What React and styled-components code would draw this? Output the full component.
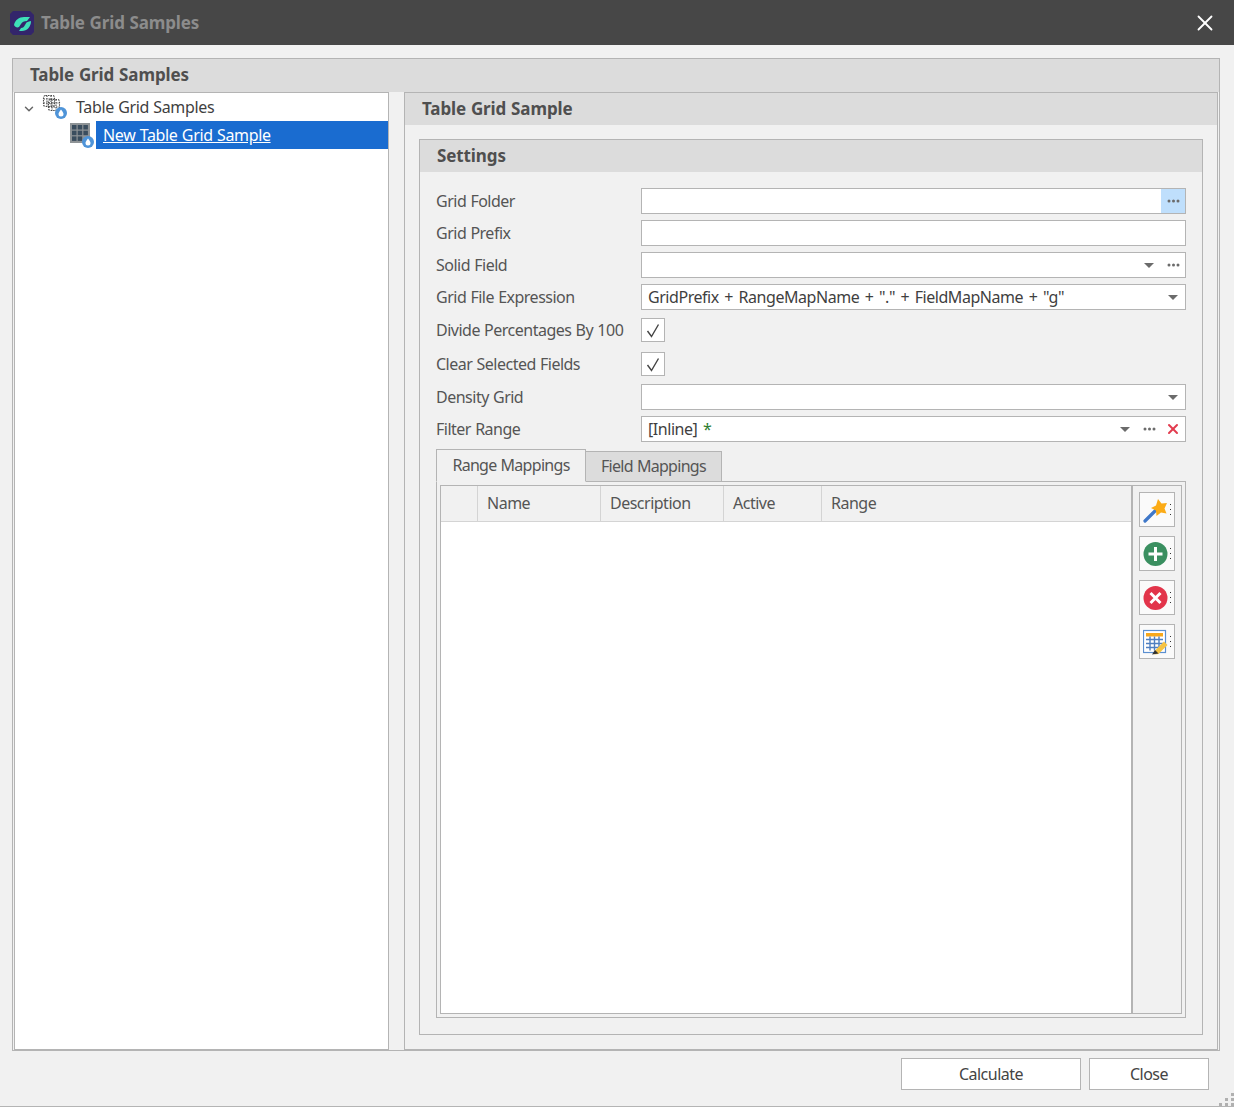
import React from 'react'
import styled, { createGlobalStyle } from 'styled-components'
import { X, ChevronDown } from 'lucide-react'

const GlobalStyle = createGlobalStyle`
  html, body { margin: 0; padding: 0; background: #f1f1f1; }
  body { font-family: "Noto Sans", "Open Sans", "Liberation Sans", sans-serif; font-size: 16px; letter-spacing: -0.5px; word-spacing: 0.5px; color: #4d4d4d; }
  * { box-sizing: border-box; }
`

const line = '#b4b4b4'

const Window = styled.div`
  width: 1234px;
  height: 1107px;
  display: flex;
  flex-direction: column;
  background: #f1f1f1;
  border-bottom: 1px solid ${line};
  position: relative;
  overflow: hidden;
`

const TitleBar = styled.div`
  height: 45px;
  flex: none;
  background: #474747;
  display: flex;
  align-items: center;
  padding: 0 16px 0 10px;
  gap: 7px;
`

const TitleText = styled.div`
  flex: 1;
  font-size: 17px;
  font-weight: 700;
  color: #8c8c8c;
  letter-spacing: -0.15px;
`

const Body = styled.div`
  flex: 1;
  min-height: 0;
  display: flex;
  flex-direction: column;
  padding: 13px 14px 0 12px;
`

const Group = styled.div`
  flex: 1;
  min-height: 0;
  display: flex;
  flex-direction: column;
  border: 1px solid ${line};
`

const GroupHeader = styled.div`
  flex: none;
  height: ${p => p.$height || 33}px;
  background: #dcdcdc;
  display: flex;
  align-items: center;
  padding-left: ${p => p.$indent || 17}px;
  padding-bottom: 2px;
  font-size: 17px;
  font-weight: 700;
  color: #4f4f4f;
  letter-spacing: -0.1px;
`

const Split = styled.div`
  flex: 1;
  min-height: 0;
  display: flex;
  padding: 0 1px 0 1px;
`

const TreePanel = styled.div`
  width: 375px;
  flex: none;
  background: #fff;
  border: 1px solid ${line};
`

const TreeRow = styled.div`
  height: 28px;
  display: flex;
  align-items: center;
  position: relative;
  padding-left: ${p => p.$indent}px;
`

const TreeLabel = styled.span`
  height: 28px;
  display: flex;
  align-items: center;
  flex: ${p => (p.$selected ? 1 : 'none')};
  padding-left: 7px;
  padding-bottom: 1px;
  letter-spacing: -0.35px;
  margin-left: ${p => p.$offset || 0}px;
  background: ${p => (p.$selected ? '#1a6cd0' : 'transparent')};
  color: ${p => (p.$selected ? '#fff' : '#3f3f3f')};
  text-decoration: ${p => (p.$selected ? 'underline' : 'none')};
`

const Expander = styled.span`
  width: 28px;
  display: flex;
  justify-content: center;
  color: #666;
  margin-top: 3px;
`

const TreeIcon = styled.svg`
  position: absolute;
  top: ${p => p.$top}px;
  left: ${p => p.$left}px;
`

const RightPanel = styled.div`
  flex: 1;
  margin-left: 15px;
  display: flex;
  flex-direction: column;
  border: 1px solid ${line};
  background: #f1f1f1;
`

const RightBody = styled.div`
  flex: 1;
  min-height: 0;
  display: flex;
  padding: 14px 14px 14px 14px;
`

const SettingsBox = styled.div`
  flex: 1;
  display: flex;
  flex-direction: column;
  border: 1px solid ${line};
`

const Form = styled.div`
  flex: 1;
  min-height: 0;
  display: flex;
  flex-direction: column;
  gap: 6px;
  padding: 16px 16px 16px 16px;
`

const Row = styled.div`
  flex: none;
  height: ${p => (p.$check ? 28 : 26)}px;
  display: flex;
  align-items: center;
`

const Label = styled.label`
  width: 205px;
  flex: none;
  color: #555;
`

const Input = styled.div`
  flex: 1;
  height: 26px;
  display: flex;
  align-items: center;
  background: #fff;
  border: 1px solid ${line};
  padding-left: 6px;
  color: #3f3f3f;
  white-space: pre;
  letter-spacing: -0.45px;
  word-spacing: 1.8px;
`

const InputText = styled.span`
  flex: 1;
`

const Star = styled.span`
  color: #2e7d32;
`

const EditBtn = styled.span`
  width: 24px;
  height: 24px;
  flex: none;
  display: flex;
  align-items: center;
  justify-content: center;
  background: ${p => (p.$active ? '#bfdffc' : 'transparent')};
  color: #e23b4e;
`

const CheckBox = styled.div`
  width: 24px;
  height: 24px;
  background: #fff;
  border: 1px solid ${line};
  display: flex;
  align-items: center;
  justify-content: center;
  color: #444;
`

const Tabs = styled.div`
  flex: 1;
  min-height: 0;
  margin-top: 1px;
  display: flex;
  flex-direction: column;
`

const TabStrip = styled.div`
  flex: none;
  height: 33px;
  display: flex;
  align-items: flex-end;
  margin-bottom: -1px;
  position: relative;
  z-index: 1;
`

const Tab = styled.div`
  height: ${p => (p.$active ? 33 : 31)}px;
  width: ${p => (p.$active ? 150 : 136)}px;
  display: flex;
  align-items: center;
  justify-content: center;
  padding-bottom: 2px;
  letter-spacing: -0.7px;
  border: 1px solid ${line};
  border-left: ${p => (p.$active ? `1px solid ${line}` : 'none')};
  border-bottom: ${p => (p.$active ? '1px solid #f1f1f1' : `1px solid ${line}`)};
  background: ${p => (p.$active ? '#f1f1f1' : '#dcdcdc')};
  color: #555;
`

const TabPane = styled.div`
  flex: 1;
  min-height: 0;
  border: 1px solid ${line};
  padding: 3px;
  display: flex;
`

const Inner = styled.div`
  flex: 1;
  display: flex;
  border: 1px solid ${line};
`

const Grid = styled.div`
  flex: 1;
  background: #fff;
  display: flex;
  flex-direction: column;
`

const GridHead = styled.div`
  flex: none;
  height: 36px;
  display: flex;
  background: #f1f1f1;
  border-bottom: 1px solid #d4d4d4;
`

const HeadCell = styled.div`
  width: ${p => p.$w}px;
  flex: ${p => (p.$grow ? 1 : 'none')};
  display: flex;
  align-items: center;
  padding-left: 9px;
  padding-bottom: 2px;
  border-right: ${p => (p.$grow ? 'none' : '1px solid #d4d4d4')};
  color: #555;
`

const SideBar = styled.div`
  width: 50px;
  flex: none;
  border-left: 2px solid ${line};
  display: flex;
  flex-direction: column;
  gap: 9px;
  padding: 6px 0 0 6px;
`

const ToolButton = styled.div`
  width: 36px;
  height: 35px;
  background: #fafafa;
  border: 1px solid ${line};
  display: flex;
  align-items: center;
  padding-left: 3px;
  gap: 1px;
`

const Grab = styled.span`
  width: 1px;
  height: 12px;
  background-image: linear-gradient(#333 1px, transparent 1px);
  background-size: 1px 5px;
`

const Footer = styled.div`
  flex: none;
  height: 55px;
  display: flex;
  justify-content: flex-end;
  gap: 8px;
  padding: 7px 11px 0 0;
`

const Button = styled.button`
  width: ${p => p.$w}px;
  height: 32px;
  background: #fff;
  border: 1px solid ${line};
  font: inherit;
  letter-spacing: inherit;
  color: #444;
`

const Grip = styled.svg`
  position: absolute;
  right: 0;
  bottom: 0;
`

const Dots = ({ active }) => (
  <EditBtn $active={active}>
    <svg width="13" height="4" viewBox="0 0 13 4"><g fill="#6b6b6b"><circle cx="2" cy="2" r="1.500" /><circle cx="6.500" cy="2" r="1.500" /><circle cx="11" cy="2" r="1.500" /></g></svg>
  </EditBtn>
)

const Caret = () => (
  <EditBtn>
    <svg width="10" height="5" viewBox="0 0 10 5"><path d="M0 0h10L5 5z" fill="#6b6b6b" /></svg>
  </EditBtn>
)

const Tick = () => (
  <svg width="14" height="15" viewBox="0 0 14 15">
    <path d="M1.500 8 5.500 13.500 12.500 1.500" fill="none" stroke="#444" strokeWidth="1.400" />
  </svg>
)

const Logo = () => (
  <svg width="24" height="24" viewBox="0 0 24 24">
    <path d="M3 0h17l4 4v17l-3 3H3l-3-3V3z" fill="#33256b" />
    <path d="M4 14c1-5 5-8 10-8h6l-3 4c-3 0-5 1-6 3l-2 3c-2 1-4 0-5-2z" fill="#3ee0b8" />
    <path d="M21 10c0 6-4 10-9 10H9l2-3c2 0 3-1 4-3l1.500-2.500c1.500-1 3.500-1 4.500-1.500z" fill="#3ee0b8" />
  </svg>
)

const Drop = ({ x, y }) => (
  <g transform={`translate(${x} ${y})`}>
    <circle cx="6" cy="6" r="6" fill="#4f94d8" />
    <path d="M6 2.500c1.700 2.200 2.500 3.400 2.500 4.500a2.500 2.500 0 0 1-5 0C3.500 5.900 4.300 4.700 6 2.500z" fill="#fff" />
  </g>
)

const SamplesIcon = () => (
  <TreeIcon $left={26} $top={0} width="26" height="28" viewBox="0 0 26 28">
    <g fill="none" stroke="#4a4a4a" strokeWidth="1.100" strokeDasharray="1.500 1">
      <rect x="2.500" y="2.500" width="11" height="11" rx="2" />
      <path d="M2.500 6h11M2.500 10h11M6 2.500v11M10 2.500v11" />
      <rect x="7.500" y="6.500" width="11" height="11" rx="2" />
      <path d="M7.500 10h11M7.500 14h11M11 6.500v11M15 6.500v11" />
    </g>
    <Drop x={14} y={14} />
  </TreeIcon>
)

const GridIcon = () => (
  <TreeIcon $left={54} $top={1} width="26" height="28" viewBox="0 0 26 28">
    <rect x="1" y="1" width="20" height="20" fill="#8e9396" />
    <g fill="#3a4d5e">
      <rect x="3" y="3" width="4.500" height="4.500" /><rect x="8.700" y="3" width="4.500" height="4.500" /><rect x="14.400" y="3" width="4.500" height="4.500" />
      <rect x="3" y="8.700" width="4.500" height="4.500" /><rect x="8.700" y="8.700" width="4.500" height="4.500" /><rect x="14.400" y="8.700" width="4.500" height="4.500" />
      <rect x="3" y="14.400" width="4.500" height="4.500" /><rect x="8.700" y="14.400" width="4.500" height="4.500" />
    </g>
    <Drop x={13} y={14} />
  </TreeIcon>
)

const WandIcon = () => (
  <svg width="26" height="28" viewBox="0 0 26 28">
    <path d="M2 25 13 14" stroke="#3f78c9" strokeWidth="3.200" strokeLinecap="round" />
    <path d="M15 3l3.500 4.500 5.500-.5-2.500 5.500 2 5-5.500-1-4.500 3.500-.5-5.500-5-2.500 5-2.500z" fill="#fbab16" />
  </svg>
)

const AddIcon = () => (
  <svg width="26" height="26" viewBox="0 0 26 26">
    <circle cx="12.500" cy="13" r="12" fill="#3a8f60" />
    <path d="M12.500 6v14M5.500 13h14" stroke="#fff" strokeWidth="3" />
  </svg>
)

const RemoveIcon = () => (
  <svg width="26" height="26" viewBox="0 0 26 26">
    <circle cx="12.500" cy="13" r="12" fill="#e2344a" />
    <path d="M7.500 8l10 10M17.500 8l-10 10" stroke="#fff" strokeWidth="3" />
  </svg>
)

const TableEditIcon = () => (
  <svg width="26" height="28" viewBox="0 0 26 28">
    <rect x="0.500" y="2.500" width="22" height="22" fill="#fff" stroke="#5b8fd0" strokeWidth="1.200" />
    <rect x="3" y="5" width="17" height="3.500" fill="#f7a81b" />
    <path d="M3 11.500h17M3 15.500h17M3 19.500h14M7 8.500v14M11.500 8.500v14M16 8.500v11" stroke="#4f7fc0" strokeWidth="1.400" fill="none" />
    <path d="M12 22.500l9-9 3.500 3.500-9 9-4 .5z" fill="#f6c343" />
    <path d="M9 26.500l3-4.500 3.500 3.500z" fill="#333" />
  </svg>
)

const fields = [
  { label: 'Grid Folder', controls: [<Dots key="d" active />] },
  { label: 'Grid Prefix', controls: [] },
  { label: 'Solid Field', controls: [<Caret key="c" />, <Dots key="d" />] },
  { label: 'Grid File Expression', value: 'GridPrefix + RangeMapName + "." + FieldMapName + "g"', controls: [<Caret key="c" />] },
  { label: 'Divide Percentages By 100', check: true },
  { label: 'Clear Selected Fields', check: true },
  { label: 'Density Grid', controls: [<Caret key="c" />] },
]

const tools = [WandIcon, AddIcon, RemoveIcon, TableEditIcon]

const columns = [
  { title: '', w: 37 },
  { title: 'Name', w: 123 },
  { title: 'Description', w: 123 },
  { title: 'Active', w: 98 },
  { title: 'Range', grow: true },
]

const App = () => {
  return (
    <Window>
      <GlobalStyle />
      <TitleBar>
        <Logo />
        <TitleText>Table Grid Samples</TitleText>
        <X size={26} color="#fff" strokeWidth={1.700} />
      </TitleBar>
      <Body>
        <Group>
          <GroupHeader>Table Grid Samples</GroupHeader>
          <Split>
            <TreePanel>
              <TreeRow $indent={0}>
                <Expander><ChevronDown size={14} strokeWidth={2.500} /></Expander>
                <SamplesIcon />
                <TreeLabel $offset={26}>Table Grid Samples</TreeLabel>
              </TreeRow>
              <TreeRow $indent={81}>
                <GridIcon />
                <TreeLabel $selected>New Table Grid Sample</TreeLabel>
              </TreeRow>
            </TreePanel>
            <RightPanel>
              <GroupHeader $height={32}>Table Grid Sample</GroupHeader>
              <RightBody>
                <SettingsBox>
                  <GroupHeader $height={32}>Settings</GroupHeader>
                  <Form>
                    {fields.map(f => (
                      <Row key={f.label} $check={f.check}>
                        <Label>{f.label}</Label>
                        {f.check ? (
                          <CheckBox><Tick /></CheckBox>
                        ) : (
                          <Input>
                            <InputText>{f.value}</InputText>
                            {f.controls}
                          </Input>
                        )}
                      </Row>
                    ))}
                    <Row>
                      <Label>Filter Range</Label>
                      <Input>
                        <InputText>[Inline] <Star>*</Star></InputText>
                        <Caret />
                        <Dots />
                        <EditBtn><X size={16} strokeWidth={3} /></EditBtn>
                      </Input>
                    </Row>
                    <Tabs>
                      <TabStrip>
                        <Tab $active>Range Mappings</Tab>
                        <Tab>Field Mappings</Tab>
                      </TabStrip>
                      <TabPane>
                        <Inner>
                          <Grid>
                            <GridHead>
                              {columns.map(c => (
                                <HeadCell key={c.title} $w={c.w} $grow={c.grow}>{c.title}</HeadCell>
                              ))}
                            </GridHead>
                          </Grid>
                          <SideBar>
                            {tools.map((Icon, i) => (
                              <ToolButton key={i}>
                                <Icon />
                                <Grab />
                              </ToolButton>
                            ))}
                          </SideBar>
                        </Inner>
                      </TabPane>
                    </Tabs>
                  </Form>
                </SettingsBox>
              </RightBody>
            </RightPanel>
          </Split>
        </Group>
        <Footer>
          <Button $w={180}>Calculate</Button>
          <Button $w={120}>Close</Button>
        </Footer>
      </Body>
      <Grip width="16" height="14" viewBox="0 0 16 14">
        <g fill="#b0b0b0">
          <rect x="13" y="1" width="3" height="3" />
          <rect x="7" y="6" width="3" height="3" /><rect x="13" y="6" width="3" height="3" />
          <rect x="1" y="11" width="3" height="3" /><rect x="7" y="11" width="3" height="3" /><rect x="13" y="11" width="3" height="3" />
        </g>
      </Grip>
    </Window>
  )
}

export default App
